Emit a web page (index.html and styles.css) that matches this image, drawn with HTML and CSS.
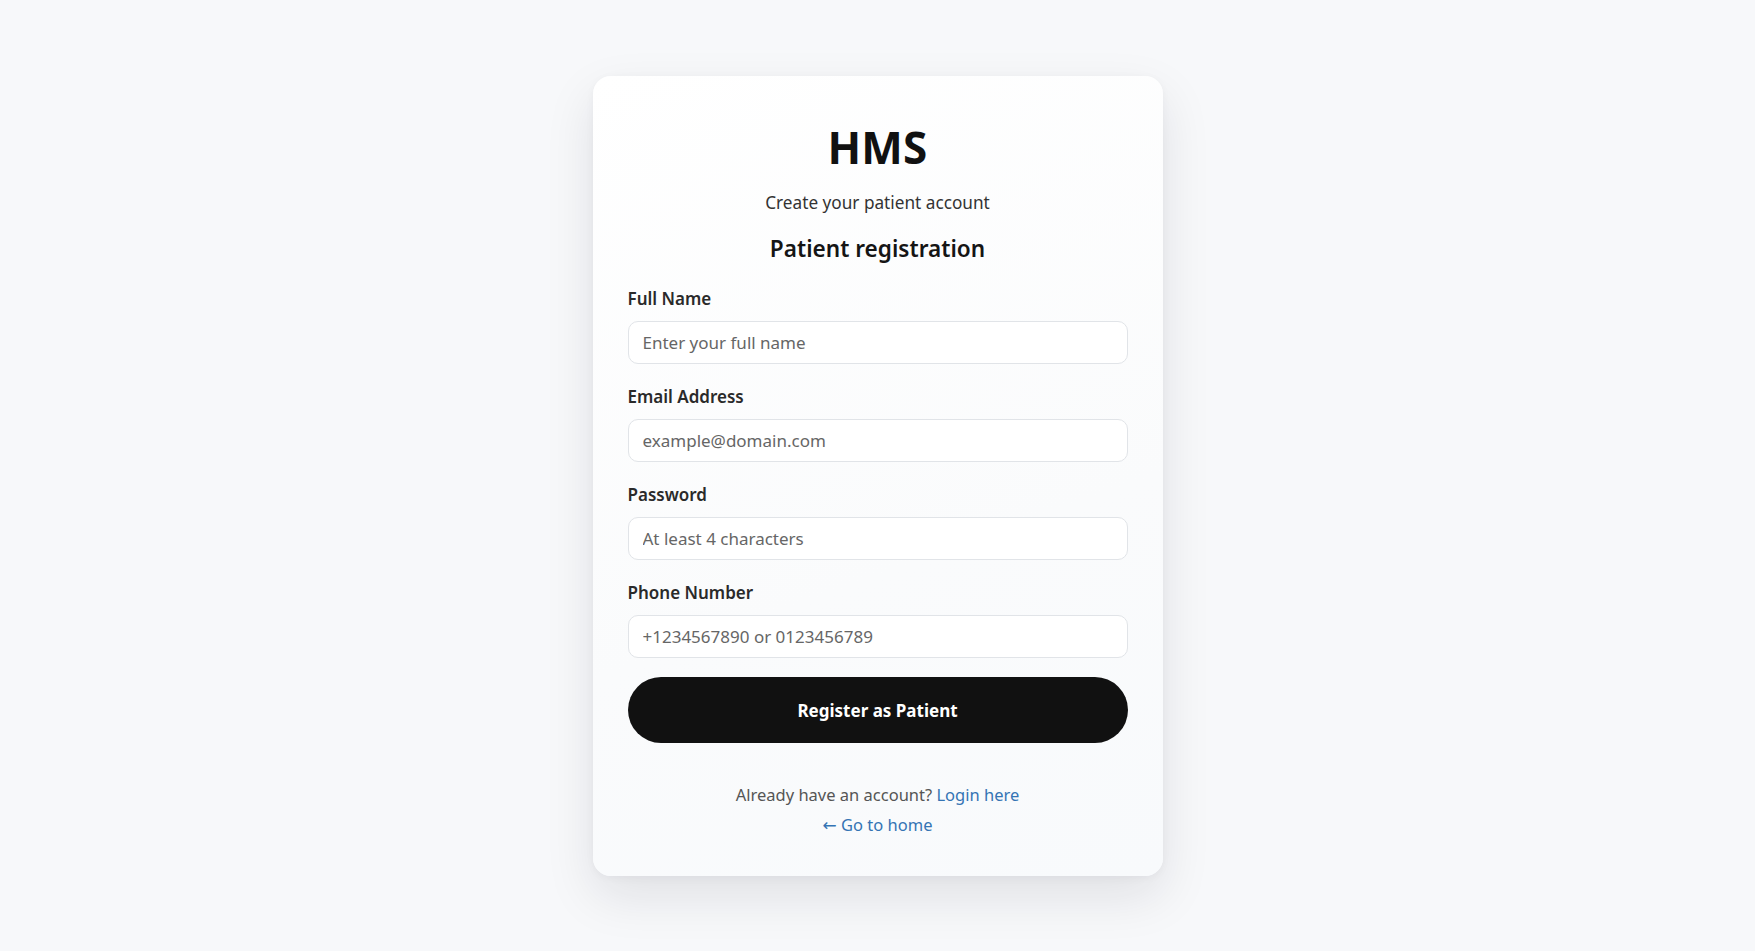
FILE: index.html
```html
<!DOCTYPE html>
<html lang="en">
<head>
<meta charset="utf-8">
<title>HMS - Patient registration</title>
<link rel="stylesheet" href="styles.css">
</head>
<body>
<main class="page">
  <section class="card">
    <h1 class="brand">HMS</h1>
    <p class="subtitle">Create your patient account</p>
    <h2 class="heading">Patient registration</h2>
    <form class="form">
      <div class="field">
        <label class="label" for="name">Full Name</label>
        <input class="input" id="name" type="text" placeholder="Enter your full name">
      </div>
      <div class="field">
        <label class="label" for="email">Email Address</label>
        <input class="input" id="email" type="email" placeholder="example@domain.com">
      </div>
      <div class="field">
        <label class="label" for="password">Password</label>
        <input class="input" id="password" type="password" placeholder="At least 4 characters">
      </div>
      <div class="field">
        <label class="label" for="phone">Phone Number</label>
        <input class="input" id="phone" type="tel" placeholder="+1234567890 or 0123456789">
      </div>
      <button class="submit" type="button">Register as Patient</button>
    </form>
    <div class="links">
      <p class="switch">Already have an account? <a class="link" href="#">Login here</a></p>
      <a class="link home" href="#"><span class="arrow">&larr;</span> Go to home</a>
    </div>
  </section>
</main>
</body>
</html>
```
FILE: styles.css
```css
* { box-sizing: border-box; }
html, body { margin: 0; padding: 0; }
body {
  background: #f7f8fa;
  font-family: "Noto Sans", "Open Sans", sans-serif;
  color: #1a1a1a;
  height: 951px;
}
.page {
  display: flex;
  justify-content: center;
  padding-top: 76px;
}
.card {
  width: 570px;
  padding: 41px 35px 39px;
  background: linear-gradient(160deg, #ffffff 0%, #fafbfc 60%, #f8fafc 100%);
  border-radius: 18px;
  box-shadow: 0 20px 50px rgba(15, 23, 42, 0.10), 0 2px 8px rgba(15, 23, 42, 0.04);
  display: flex;
  flex-direction: column;
  align-items: stretch;
}
.brand {
  margin: 0;
  text-align: center;
  font-size: 44px;
  font-weight: 700;
  line-height: 60px;
  color: #111;
  letter-spacing: 0.2px;
}
.subtitle {
  margin: 14px 0 0;
  text-align: center;
  font-size: 17.2px;
  line-height: 24px;
  color: #333;
}
.heading {
  margin: 18px 0 0;
  text-align: center;
  font-size: 22.6px;
  font-weight: 600;
  line-height: 32px;
  color: #151515;
}
.form {
  margin-top: 22px;
  display: flex;
  flex-direction: column;
}
.field {
  display: flex;
  flex-direction: column;
}
.field + .field { margin-top: 21px; }
.label {
  font-size: 17px;
  font-weight: 600;
  line-height: 24px;
  color: #2a2a2a;
  margin-bottom: 10px;
}
.input {
  height: 43px;
  border: 1px solid #e1e4e8;
  border-radius: 10px;
  background: #fff;
  padding: 0 14px;
  font-family: inherit;
  font-size: 17px;
  color: #222;
  outline: none;
}
.input::placeholder { color: #666; }
.submit {
  margin-top: 19px;
  height: 66px;
  border: none;
  border-radius: 999px;
  background: #111;
  color: #fff;
  font-family: inherit;
  font-size: 17px;
  font-weight: 700;
  cursor: pointer;
}
.links {
  margin-top: 40px;
  display: flex;
  flex-direction: column;
  align-items: center;
  gap: 6px;
}
.switch {
  margin: 0;
  font-size: 16.5px;
  line-height: 24px;
  color: #555;
}
.link {
  color: #3474b4;
  text-decoration: none;
  font-size: 16.5px;
  line-height: 24px;
}
.arrow {
  font-family: "DejaVu Sans", sans-serif;
  font-size: 17px;
}
```
